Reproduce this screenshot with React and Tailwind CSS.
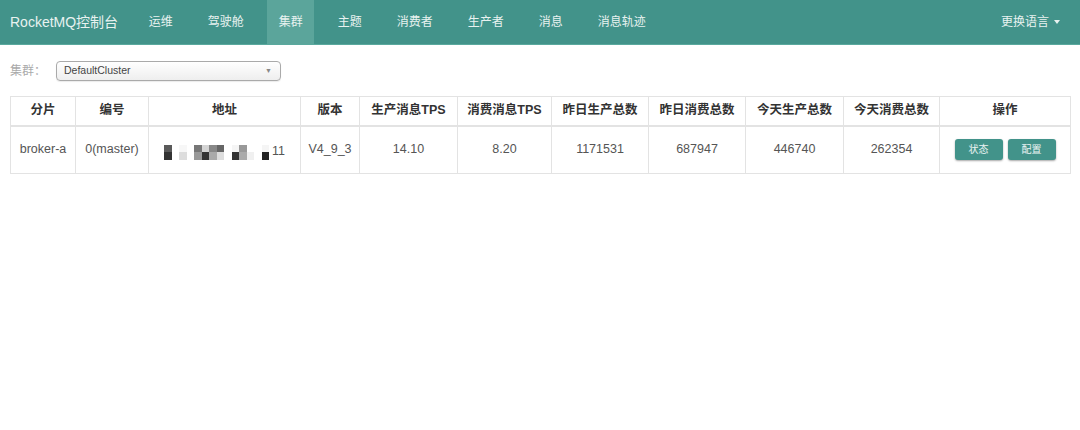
import React from "react";

const navItems = ["运维", "驾驶舱", "集群", "主题", "消费者", "生产者", "消息", "消息轨迹"];

const columns = [
  { label: "分片", w: "w-[65px]" },
  { label: "编号", w: "w-[73px]" },
  { label: "地址", w: "w-[152px]" },
  { label: "版本", w: "w-[59px]" },
  { label: "生产消息TPS", w: "w-[98px]" },
  { label: "消费消息TPS", w: "w-[94px]" },
  { label: "昨日生产总数", w: "w-[97px]" },
  { label: "昨日消费总数", w: "w-[97px]" },
  { label: "今天生产总数", w: "w-[98px]" },
  { label: "今天消费总数", w: "w-[96px]" },
  { label: "操作", w: "w-[131px]" },
];

// blurred address, column by column: [top, bottom]
const mosaic = [
  ["bg-[#5a5a5a]", "bg-[#333333]"],
  ["bg-white", "bg-white"],
  ["bg-[#f7f7f7]", "bg-[#dddddd]"],
  ["bg-white", "bg-white"],
  ["bg-[#777777]", "bg-[#999999]"],
  ["bg-[#d4d4d4]", "bg-[#333333]"],
  ["bg-[#888888]", "bg-[#aaaaaa]"],
  ["bg-[#666666]", "bg-[#dddddd]"],
  ["bg-white", "bg-white"],
  ["bg-[#f5f5f5]", "bg-[#333333]"],
  ["bg-[#999999]", "bg-[#aaaaaa]"],
  ["bg-white", "bg-[#f0f0f0]"],
  ["bg-white", "bg-white"],
  ["bg-[#f5f5f5]", "bg-[#222222]"],
];

const Address = () => (
  <span className="inline-flex items-center">
    {mosaic.map(([top, bottom], i) => (
      <span key={i} className="flex flex-col">
        <span className={`w-[7.5px] h-[7.5px] ${top}`} />
        <span className={`w-[7.5px] h-[7.5px] ${bottom}`} />
      </span>
    ))}
    <span className="ml-[3px] mt-[-2px] text-[#555]">11</span>
  </span>
);

const Btn = ({ children }) => (
  <button className="w-[48px] h-[21px] rounded-[3px] bg-[#42938a] text-white/90 text-[10px] shadow-[0_1px_2px_rgba(0,0,0,0.35)]">
    {children}
  </button>
);

export default function App() {
  const row = [
    "broker-a",
    "0(master)",
    <Address />,
    "V4_9_3",
    "14.10",
    "8.20",
    "1171531",
    "687947",
    "446740",
    "262354",
  ];

  return (
    <div
      className="w-[1080px] h-[430px] bg-white text-[#555]"
      style={{ fontFamily: '"Liberation Sans", Arial, "Noto Sans CJK SC", sans-serif' }}
    >
      {/* Top bar */}
      <div className="h-[45px] bg-[#42938a] border-b border-[#5aa99e] flex items-stretch text-[#e8f2f0]">
        <div className="pl-[10px] pr-[19px] flex items-center text-[14px]">RocketMQ控制台</div>
        <div className="flex items-stretch gap-[12px]">
          {navItems.map((n) => (
            <div
              key={n}
              className={`px-[11.5px] flex items-center text-[12px] ${n === "集群" ? "bg-[#5ba59b]" : ""}`}
            >
              {n}
            </div>
          ))}
        </div>
        <div className="ml-auto pr-[20px] flex items-center gap-[5px] text-[12px]">
          更换语言
          <span className="w-0 h-0 border-l-[3.5px] border-r-[3.5px] border-t-[4px] border-l-transparent border-r-transparent border-t-[#e8f2f0]" />
        </div>
      </div>

      {/* Filter */}
      <div className="flex items-center px-[10px] pt-[16px] pb-[15px]">
        <span className="text-[12px] text-[#aaa] w-[46px]">集群：</span>
        <div className="w-[225px] h-[20px] rounded-[4px] border border-[#aaa] bg-gradient-to-b from-white to-[#eeeeee] flex items-center justify-between pl-[7px] pr-[8px] text-[10.5px] text-[#444] shadow-[0_1px_1px_rgba(0,0,0,0.08)]">
          <span>DefaultCluster</span>
          <span className="text-[7px] text-[#888]">▼</span>
        </div>
      </div>

      {/* Table */}
      <div className="px-[10px]">
        <table className="w-[1060px] border-collapse table-fixed border border-[#e3e3e3] text-[12.5px]">
          <thead>
            <tr className="h-[29px]">
              {columns.map((c) => (
                <th
                  key={c.label}
                  className={`${c.w} border border-[#e3e3e3] border-b-2 font-bold text-[#333] text-center`}
                >
                  {c.label}
                </th>
              ))}
            </tr>
          </thead>
          <tbody>
            <tr className="h-[48px]">
              {row.map((v, i) => (
                <td key={i} className="border border-[#e3e3e3] text-center whitespace-nowrap">
                  {v}
                </td>
              ))}
              <td className="border border-[#e3e3e3] text-center">
                <div className="flex justify-center gap-[5px]">
                  <Btn>状态</Btn>
                  <Btn>配置</Btn>
                </div>
              </td>
            </tr>
          </tbody>
        </table>
      </div>
    </div>
  );
}
